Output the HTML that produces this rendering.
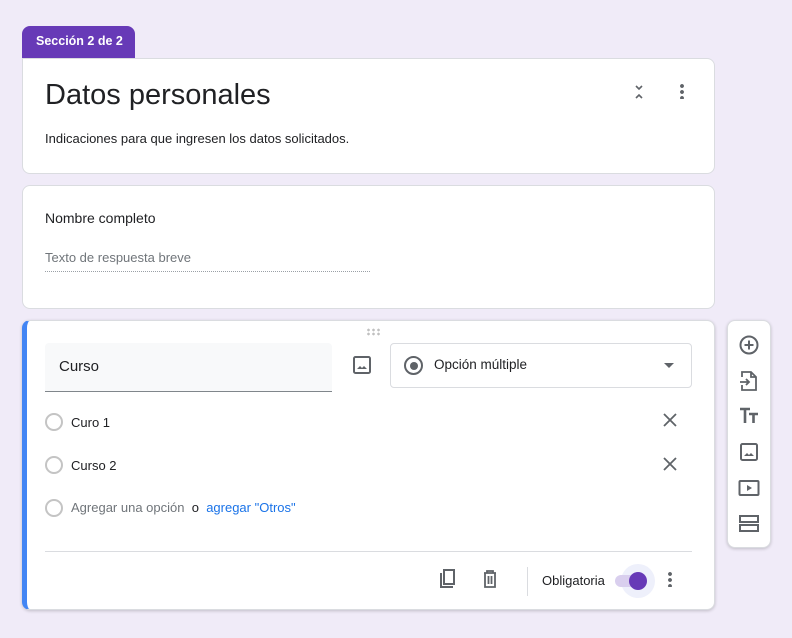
<!DOCTYPE html>
<html><head><meta charset="utf-8"><style>
*{margin:0;padding:0;box-sizing:border-box}
body{width:792px;height:638px;background:#f0ebf8;font-family:"Liberation Sans",sans-serif;color:#202124;position:relative;overflow:hidden}
.a{position:absolute}
.card{position:absolute;background:#fff;border:1px solid #dadce0;border-radius:8px}
.rad{position:absolute;width:18px;height:18px;border:2px solid #c4c4c4;border-radius:50%}
svg{position:absolute}
</style></head><body>
<div class="a" style="left:22px;top:26px;width:113px;height:34px;background:#673ab7;border-radius:8px 8px 0 0;color:#fff;font-size:12.5px;font-weight:bold;padding:8px 0 0 14px">Sección 2 de 2</div>
<div class="card" style="left:22px;top:58px;width:693px;height:116px;border-top-left-radius:0">
<div class="a" style="left:22px;top:20px;font-size:29px">Datos personales</div>
<div class="a" style="left:22px;top:72px;font-size:13px">Indicaciones para que ingresen los datos solicitados.</div>
<svg style="left:610px;top:25px" width="12" height="16" viewBox="0 0 12 16"><path d="M3 2l3 3 3-3M3 14l3-3 3 3" stroke="#5f6368" stroke-width="1.6" fill="none"/></svg>
<div class="a" style="left:657px;top:24px;width:4px;height:16px;background:radial-gradient(circle,#5f6368 1.8px,transparent 2px) 0 0/4px 6px"></div>
</div>
<div class="card" style="left:22px;top:185px;width:693px;height:124px">
<div class="a" style="left:22px;top:24px;font-size:14px">Nombre completo</div>
<div class="a" style="left:22px;top:64px;font-size:13px;color:#70757a">Texto de respuesta breve</div>
<div class="a" style="left:22px;top:85px;width:325px;border-top:1px dotted #9aa0a6"></div>
</div>
<div class="card" style="left:22px;top:320px;width:693px;height:290px;border-left:5px solid #4285f4;box-shadow:0 1px 3px rgba(0,0,0,.2)">
<div class="a" style="left:339px;top:7px;width:14px;height:8px;background:radial-gradient(circle,#c0c0c0 1.2px,transparent 1.5px) 0 0/5px 4px"></div>
<div class="a" style="left:18px;top:22px;width:287px;height:49px;background:#f8f9fa;border-bottom:1px solid #80868b;border-radius:4px 4px 0 0;font-size:15px;padding:15px 0 0 14px">Curso</div>
<svg style="left:325px;top:34px" width="20" height="20" viewBox="0 0 20 20"><rect x="2" y="2" width="16" height="16" rx="1.5" fill="none" stroke="#5f6368" stroke-width="2"/><path d="M5 14l3-3 2 2 2-2 3 3z" fill="#5f6368"/></svg>
<div class="a" style="left:363px;top:22px;width:302px;height:45px;border:1px solid #dadce0;border-radius:4px">
<div class="a" style="left:13px;top:12px;width:19px;height:19px;border:2px solid #5f6368;border-radius:50%"><div class="a" style="left:3.5px;top:3.5px;width:8px;height:8px;background:#5f6368;border-radius:50%"></div></div>
<div class="a" style="left:43px;top:13px;font-size:13.5px">Opción múltiple</div>
<div class="a" style="left:273px;top:19px;border:5px solid transparent;border-top-color:#5f6368"></div>
</div>
<div class="rad" style="left:18px;top:92px"></div><div class="a" style="left:44px;top:94px;font-size:13px">Curo 1</div>
<div class="rad" style="left:18px;top:135px"></div><div class="a" style="left:44px;top:137px;font-size:13px">Curso 2</div>
<div class="rad" style="left:18px;top:178px"></div><div class="a" style="left:44px;top:179px;font-size:13px;color:#70757a">Agregar una opción <span style="color:#202124">&nbsp;o&nbsp;</span> <span style="color:#1a73e8">agregar "Otros"</span></div>
<svg style="left:636px;top:92px" width="14" height="14" viewBox="0 0 14 14"><path d="M1 1l12 12M13 1L1 13" stroke="#5f6368" stroke-width="1.8"/></svg>
<svg style="left:636px;top:136px" width="14" height="14" viewBox="0 0 14 14"><path d="M1 1l12 12M13 1L1 13" stroke="#5f6368" stroke-width="1.8"/></svg>
<div class="a" style="left:18px;top:230px;width:647px;border-top:1px solid #dadce0"></div>
<svg style="left:410px;top:247px" width="20" height="22" viewBox="0 0 20 22"><path d="M4 5v14h12" fill="none" stroke="#5f6368" stroke-width="2"/><rect x="7" y="2" width="10" height="14" fill="none" stroke="#5f6368" stroke-width="2"/></svg>
<svg style="left:455px;top:248px" width="16" height="20" viewBox="0 0 16 20"><path d="M2 4h12M5 4V2h6v2M3 4v14h10V4M6.5 7v8M9.5 7v8" fill="none" stroke="#5f6368" stroke-width="1.8"/></svg>
<div class="a" style="left:500px;top:246px;height:29px;border-left:1px solid #dadce0"></div>
<div class="a" style="left:515px;top:252px;font-size:13px">Obligatoria</div>
<div class="a" style="left:594px;top:243px;width:34px;height:34px;border-radius:50%;background:#eef0fb"></div>
<div class="a" style="left:588px;top:254px;width:32px;height:12px;border-radius:6px;background:#d9cfee"></div>
<div class="a" style="left:602px;top:251px;width:18px;height:18px;border-radius:50%;background:#673ab7"></div>
<div class="a" style="left:641px;top:250px;width:4px;height:16px;background:radial-gradient(circle,#5f6368 1.8px,transparent 2px) 0 0/4px 6px"></div>
</div>
<div class="card" style="left:727px;top:320px;width:44px;height:228px;box-shadow:0 1px 3px rgba(0,0,0,.2)">
<svg style="left:10px;top:13px" width="22" height="22" viewBox="0 0 22 22"><circle cx="11" cy="11" r="8.5" fill="none" stroke="#5f6368" stroke-width="2"/><path d="M11 6.5v9M6.5 11h9" stroke="#5f6368" stroke-width="2"/></svg>
<svg style="left:11px;top:49px" width="20" height="22" viewBox="0 0 20 22"><path d="M3 7V2h9l5 5v13H3v-5M12 2v5h5M1 12h9M7 9l3 3-3 3" fill="none" stroke="#5f6368" stroke-width="1.8"/></svg>
<svg style="left:11px;top:85px" width="20" height="20" viewBox="0 0 20 20"><path d="M1 3h10M6 3v14M10 8h9M14.5 8v9" stroke="#5f6368" stroke-width="2.6"/></svg>
<svg style="left:11px;top:121px" width="20" height="20" viewBox="0 0 20 20"><rect x="2" y="2" width="16" height="16" rx="1.5" fill="none" stroke="#5f6368" stroke-width="2"/><path d="M5 14l3-3 2 2 2-2 3 3z" fill="#5f6368"/></svg>
<svg style="left:10px;top:158px" width="22" height="18" viewBox="0 0 22 18"><rect x="1.5" y="2" width="19" height="14" rx="1" fill="none" stroke="#5f6368" stroke-width="2"/><path d="M9 6v6l5-3z" fill="#5f6368"/></svg>
<svg style="left:10px;top:193px" width="22" height="20" viewBox="0 0 22 20"><rect x="2" y="2" width="18" height="6" fill="none" stroke="#5f6368" stroke-width="2"/><rect x="2" y="11" width="18" height="6" fill="none" stroke="#5f6368" stroke-width="2"/></svg>
</div>
</body></html>
